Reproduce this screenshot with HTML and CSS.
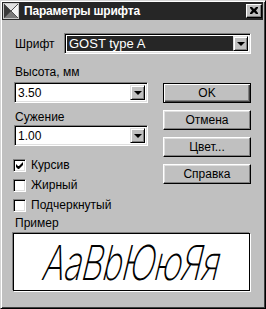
FILE: index.html
```html
<!DOCTYPE html>
<html lang="ru">
<head>
<meta charset="utf-8">
<title>Параметры шрифта</title>
<link rel="stylesheet" href="styles.css">
</head>
<body>
<div class="win">
  <div class="titlebar">
    <svg class="appicon" width="16" height="16" viewBox="0 0 16 16">
      <rect x="0" y="0" width="16" height="16" fill="#9a9a9a"/>
      <polygon points="1,1 15,1 8,8" fill="#e0e0e0"/>
      <polygon points="1,1 8,8 1,15" fill="#3a3a3a"/>
      <polygon points="15,1 15,15 8,8" fill="#f4f4f4"/>
      <polygon points="1,15 8,8 15,15" fill="#7a7a7a"/>
      <path d="M1 1 L15 15 M15 1 L1 15" stroke="#505050" stroke-width="1"/>
      <rect x="0.5" y="0.5" width="15" height="15" fill="none" stroke="#c8c8c8"/>
    </svg>
    <span class="title">Параметры шрифта</span>
    <div class="close">
      <svg width="8" height="7" viewBox="0 0 8 7"><path d="M0 0h2l2 2 2-2h2v1l-2 2.5 2 2.5v1h-2l-2-2-2 2h-2v-1l2-2.5-2-2.5z" fill="#000"/></svg>
    </div>
  </div>
  <div class="body">
    <div class="row-font">
      <span class="lbl-font">Шрифт</span>
      <div class="combo combo-font">
        <span class="combo-text dark">GOST type A</span>
        <span class="drop"><span class="arrow"></span></span>
      </div>
    </div>
    <div class="mid">
      <div class="left">
        <div class="lbl lbl-first">Высота, мм</div>
        <div class="combo combo-small">
          <span class="combo-text">3.50</span>
          <span class="drop"><span class="arrow"></span></span>
        </div>
        <div class="lbl lbl-second">Сужение</div>
        <div class="combo combo-small combo-second">
          <span class="combo-text">1.00</span>
          <span class="drop"><span class="arrow"></span></span>
        </div>
        <div class="checks">
          <div class="check-row">
            <span class="cb"><svg width="7" height="7" viewBox="0 0 7 7"><path d="M0 2v3l2 2h1l4-4v-3l-4 4h-1z" fill="#000"/></svg></span>
            <span>Курсив</span>
          </div>
          <div class="check-row">
            <span class="cb"></span>
            <span>Жирный</span>
          </div>
          <div class="check-row">
            <span class="cb"></span>
            <span>Подчеркнутый</span>
          </div>
        </div>
      </div>
      <div class="right">
        <div class="btn btn-default"><span>OK</span></div>
        <div class="btn"><span>Отмена</span></div>
        <div class="btn"><span>Цвет...</span></div>
        <div class="btn"><span>Справка</span></div>
      </div>
    </div>
    <div class="lbl lbl-sample">Пример</div>
    <div class="preview"><span class="sample">AaBbЮюЯя</span></div>
  </div>
</div>
</body>
</html>
```

FILE: styles.css
```css
* { box-sizing: border-box; }
html, body { margin: 0; padding: 0; background: #c0c0c0; }
body {
  font-family: "Liberation Sans", Arial, sans-serif;
  font-size: 12px;
  color: #000;
}
.win {
  width: 266px;
  height: 309px;
  background: #c0c0c0;
  border-top: 1px solid #d4d4d4;
  border-left: 1px solid #d4d4d4;
  border-right: 1px solid #000;
  border-bottom: 1px solid #000;
  box-shadow: inset 1px 1px 0 #fff, inset -1px -1px 0 #404040;
  padding: 1px 2px 2px 1px;
  display: flex;
  flex-direction: column;
}
.titlebar {
  height: 18px;
  background: #262626;
  display: flex;
  align-items: center;
  padding: 0 1px 0 1px;
  flex: none;
}
.appicon { flex: none; display: block; }
.title {
  color: #fff;
  font-weight: bold;
  font-size: 12px;
  margin-left: 5px;
  letter-spacing: -0.2px;
  flex: 1;
}
.close {
  width: 16px;
  height: 14px;
  background: #c0c0c0;
  border-top: 1px solid #fff;
  border-left: 1px solid #fff;
  border-right: 1px solid #000;
  border-bottom: 1px solid #000;
  box-shadow: inset -1px -1px 0 #808080;
  display: flex;
  align-items: center;
  justify-content: center;
  padding-bottom: 1px;
}
.close svg { display: block; }
.body {
  padding: 0 11px 0 11px;
  display: flex;
  flex-direction: column;
}
.row-font {
  margin-top: 13px;
  display: flex;
  align-items: center;
  height: 21px;
}
.lbl-font {
  width: 49px;
  margin-left: 2px;
}
.combo {
  height: 21px;
  border-top: 1px solid #808080;
  border-left: 1px solid #808080;
  border-right: 1px solid #fff;
  border-bottom: 1px solid #fff;
  box-shadow: inset 1px 1px 0 #000, inset -1px -1px 0 #dfdfdf;
  background: #fff;
  display: flex;
  align-items: stretch;
  padding: 2px;
}
.combo-font { width: 187px; }
.combo-text {
  flex: 1;
  display: flex;
  align-items: center;
  padding-left: 1px;
  font-size: 12px;
}
.combo-text.dark {
  background: #262626;
  color: #fff;
  font-size: 13px;
  padding-left: 2px;
}
.drop {
  width: 15px;
  flex: none;
  background: #c0c0c0;
  border-top: 1px solid #dfdfdf;
  border-left: 1px solid #dfdfdf;
  border-right: 1px solid #000;
  border-bottom: 1px solid #000;
  box-shadow: inset 1px 1px 0 #fff, inset -1px -1px 0 #808080;
  display: flex;
  align-items: center;
  justify-content: center;
}
.arrow {
  width: 0;
  height: 0;
  border-left: 4px solid transparent;
  border-right: 4px solid transparent;
  border-top: 4px solid #000;
  margin-left: 1px;
}
.mid {
  display: flex;
  align-items: flex-start;
}
.left {
  width: 136px;
  display: flex;
  flex-direction: column;
}
.lbl {
  line-height: 14px;
  height: 14px;
  margin-left: 2px;
}
.lbl-first { margin-top: 11px; }
.combo-small {
  width: 134px;
  margin-left: 1px;
  margin-top: 3px;
}
.lbl-second { margin-top: 7px; }
.combo-second { margin-top: 1px; }
.checks {
  margin-top: 12px;
  display: flex;
  flex-direction: column;
}
.check-row {
  height: 20px;
  display: flex;
  align-items: flex-start;
  padding-top: 1px;
}
.check-row span:last-child { margin-left: 5px; line-height: 13px; }
.cb {
  width: 13px;
  height: 13px;
  background: #fff;
  border-top: 1px solid #808080;
  border-left: 1px solid #808080;
  border-right: 1px solid #fff;
  border-bottom: 1px solid #fff;
  box-shadow: inset 1px 1px 0 #000, inset -1px -1px 0 #dfdfdf;
  display: flex;
  align-items: center;
  justify-content: center;
  flex: none;
}
.cb svg { display: block; }
.right {
  margin-left: auto;
  margin-right: 1px;
  margin-top: 29px;
  width: 88px;
  display: flex;
  flex-direction: column;
  gap: 7px;
}
.btn {
  height: 20px;
  background: #c0c0c0;
  border-top: 1px solid #fff;
  border-left: 1px solid #fff;
  border-right: 1px solid #000;
  border-bottom: 1px solid #000;
  box-shadow: inset -1px -1px 0 #808080, inset 1px 1px 0 #dfdfdf;
  display: flex;
  align-items: center;
  justify-content: center;
  font-size: 12px;
}
.btn-default {
  border: 1px solid #000;
  box-shadow: inset 1px 1px 0 #fff, inset -1px -1px 0 #404040, inset -2px -2px 0 #808080;
}
.lbl-sample { margin-top: -2px; }
.preview {
  margin-top: 3px;
  width: 237px;
  height: 58px;
  background: #fff;
  border: 1px solid #000;
  box-shadow: 1px 1px 0 #fff, -1px -1px 0 #808080;
  display: flex;
  align-items: center;
  justify-content: center;
  overflow: hidden;
}
.sample {
  display: inline-block;
  font-family: Inter, "DejaVu Sans", sans-serif;
  font-weight: 250;
  font-size: 48px;
  line-height: 1;
  transform: scaleX(0.7) skewX(-19deg);
  letter-spacing: -1px;
  margin-left: 2px;
  margin-top: 2px;
}
```
